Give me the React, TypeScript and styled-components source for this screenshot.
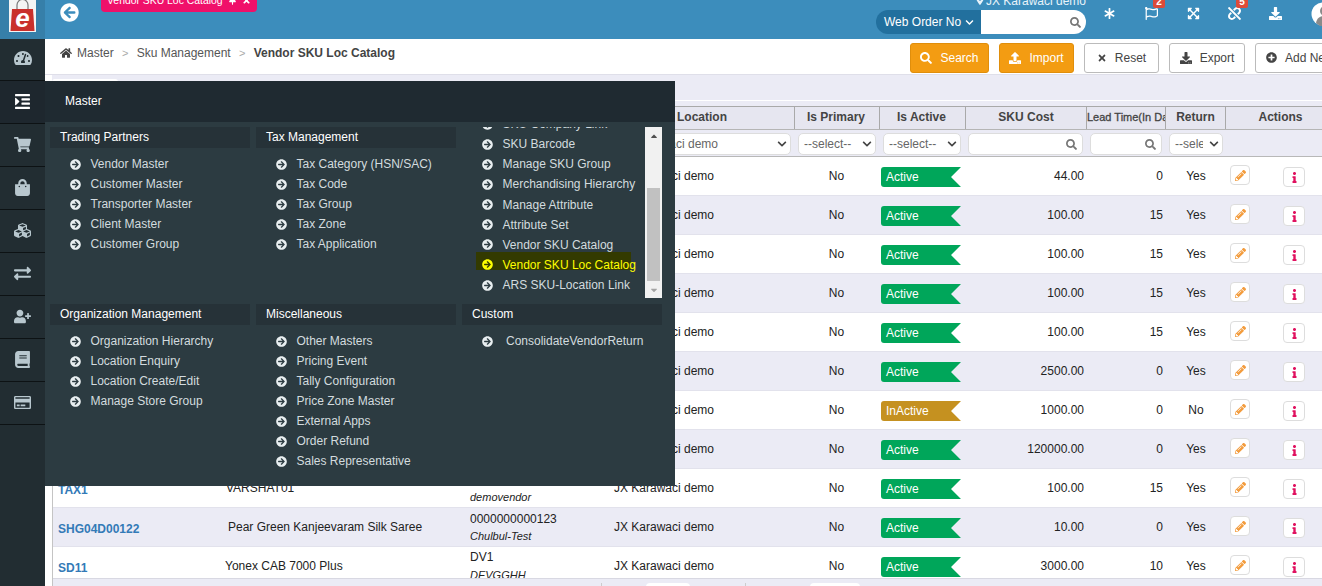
import React from "react";
import styled, { createGlobalStyle } from "styled-components";
import {
  FaArrowCircleLeft, FaArrowCircleRight, FaAsterisk, FaBook, FaChevronDown, FaCubes, FaDownload,
  FaExchangeAlt, FaExpandArrowsAlt, FaHome, FaIndent, FaInfo, FaMapMarkerAlt, FaPencilAlt, FaPlusCircle,
  FaRegCreditCard, FaRegFlag, FaSearch, FaShoppingBag, FaShoppingCart, FaTachometerAlt, FaThumbtack,
  FaTimes, FaUnlink, FaUpload, FaUserPlus, FaCaretUp, FaCaretDown,
} from "react-icons/fa";

const Global = createGlobalStyle`
  html, body { margin: 0; padding: 0; width: 1322px; height: 586px; overflow: hidden; background: #fff; }
  body, button { font-family: "Liberation Sans", Arial, sans-serif; font-size: 12px; }
  * { box-sizing: border-box; }
`;

const Page = styled.div`
  position: relative;
  width: 1322px;
  height: 586px;
  overflow: hidden;
  display: flex;
  flex-direction: column;
`;

const Header = styled.header`
  height: 39px;
  flex: none;
  background: #3c8dbc;
  display: flex;
  align-items: flex-start;
`;
const LogoBox = styled.div`
  width: 45px;
  height: 39px;
  flex: none;
  background: #367fa9;
  display: flex;
  justify-content: center;
  padding-right: 1px;
`;
const BackLink = styled.div`
  margin: 3px 0 0 15px;
  color: #fff;
  font-size: 19px;
  line-height: 0;
  width: 41px;
  flex: none;
`;
const PageTag = styled.div`
  height: 23px;
  margin-top: -11px;
  width: 156px;
  flex: none;
  background: #f0106a;
  border-radius: 4px;
  color: #fff;
  display: flex;
  align-items: center;
  padding-left: 6px;
  gap: 5px;
  font-size: 10.4px;
  white-space: nowrap;
`;
const TagIcons = styled.span`
  display: inline-flex;
  gap: 5px;
  font-size: 9px;
`;
const HeaderCenter = styled.div`
  margin-left: 619px;
  width: 210px;
  flex: none;
  display: flex;
  flex-direction: column;
`;
const LocationLine = styled.div`
  height: 15px;
  margin-top: -7px;
  margin-bottom: 2px;
  padding-left: 100px;
  color: #e8f3fa;
  white-space: nowrap;
  display: flex;
  align-items: center;
  gap: 2px;
  font-size: 12px;
  line-height: 12px;
`;
const OrderSearch = styled.div`
  height: 24px;
  display: flex;
  border-radius: 12px;
  overflow: hidden;
`;
const OrderSelect = styled.div`
  width: 105px;
  background: #22709e;
  color: #fff;
  display: flex;
  align-items: center;
  gap: 4px;
  padding-left: 8px;
  font-size: 12px;
  white-space: nowrap;
`;
const OrderInput = styled.div`
  flex: 1;
  background: #fff;
  color: #777;
  display: flex;
  align-items: center;
  justify-content: flex-end;
  padding-right: 5px;
  font-size: 11px;
`;
const HeaderIcons = styled.div`
  display: flex;
  flex: none;
  margin-left: 18px;
  height: 27px;
  align-items: center;
`;
const HeaderIcon = styled.div<{ $w: number }>`
  position: relative;
  width: ${(p) => p.$w}px;
  flex: none;
  color: #fff;
  font-size: 13px;
  line-height: 0;
  display: flex;
  justify-content: flex-start;
`;
const Badge = styled.span<{ $left: number }>`
  position: absolute;
  left: ${(p) => p.$left}px;
  top: -11px;
  width: 12px;
  height: 12px;
  border-radius: 2px;
  background: #dd4b39;
  color: #fff;
  font-size: 10px;
  font-weight: bold;
  line-height: 12px;
  text-align: center;
`;

const Body = styled.div`
  flex: 1;
  display: flex;
  min-height: 0;
`;
const Sidebar = styled.nav`
  width: 45px;
  flex: none;
  background: #222d32;
  display: flex;
  flex-direction: column;
`;
const SideItem = styled.div<{ $active?: boolean }>`
  height: 43px;
  flex: none;
  border-bottom: 1px solid #0d1214;
  display: flex;
  align-items: center;
  justify-content: center;
  padding-bottom: 2px;
  background: ${(p) => (p.$active ? "#1e272e" : "transparent")};
  color: ${(p) => (p.$active ? "#fff" : "#b8c7ce")};
  font-size: 17px;
`;
const FirstSideItem = styled(SideItem)`
  height: 42px;
  font-size: 18px;
  padding-bottom: 3px;
`;

const Main = styled.main`
  flex: 1;
  min-width: 0;
  display: flex;
  flex-direction: column;
  background: #fff;
`;
const Toolbar = styled.div`
  height: 36px;
  flex: none;
  display: flex;
  align-items: center;
  padding-left: 15px;
  color: #555;
  border-bottom: 1px solid #dfdfe9;
`;
const Crumbs = styled.div`
  display: flex;
  align-items: center;
  width: 850px;
  flex: none;
  margin-top: -8px;
  font-size: 12px;
  white-space: nowrap;
`;
const CrumbHome = styled.span`
  color: #444;
  font-size: 12px;
  line-height: 0;
  margin-right: 5px;
`;
const Sep = styled.span`
  color: #aaa;
  font-size: 11px;
  margin: 0 8.25px;
`;
const Current = styled.b`
  color: #444;
`;
const ToolButton = styled.div<{ $primary?: boolean; $w: number }>`
  width: ${(p) => p.$w}px;
  height: 30px;
  margin-top: 2px;
  margin-right: 10px;
  flex: none;
  border-radius: 3px;
  border: 1px solid ${(p) => (p.$primary ? "#e08e0b" : "#bbb")};
  background: ${(p) => (p.$primary ? "#f39c12" : "#fff")};
  color: ${(p) => (p.$primary ? "#fff" : "#444")};
  display: flex;
  align-items: center;
  justify-content: center;
  gap: 8px;
  font-size: 12px;
  white-space: nowrap;
`;
const ClippedButton = styled(ToolButton)`
  justify-content: flex-start;
  padding-left: 10px;
  margin-right: -60px;
`;
const Content = styled.div`
  flex: 1;
  min-height: 0;
  padding-left: 7px;
  display: flex;
  flex-direction: column;
`;
const TabStrip = styled.div`
  height: 25px;
  flex: none;
  background: #ebebf5;
  padding-top: 4px;
`;
const Tab = styled.div`
  width: 66px;
  height: 21px;
  background: #fff;
  border-radius: 3px 3px 0 0;
`;
const TableTop = styled.div`
  flex: none;
  height: 5px;
  margin-top: 1px;
  background: #ebebf5;
`;
const Table = styled.div`
  flex: 1;
  min-height: 0;
  display: flex;
  flex-direction: column;
  border-left: 1px solid #c4c4c4;
  border-top: 1px solid #a9a9a9;
`;
const columns = "167px 245px 143px 187px 85px 86px 121px 79px 60px 110px";
const HeadRow = styled.div`
  display: grid;
  grid-template-columns: ${columns};
  height: 23px;
  flex: none;
  background: #e6e6f0;
  border-bottom: 1px solid #b5b5b5;
`;
const HeadCell = styled.div<{ $shift?: number }>`
  border-right: 1px solid #a9a9a9;
  color: #444;
  font-weight: bold;
  font-size: 12px;
  text-align: center;
  line-height: 20px;
  padding: 0 ${(p) => (p.$shift && p.$shift < 0 ? -p.$shift : 0)}px 0 ${(p) => (p.$shift && p.$shift > 0 ? p.$shift : 0)}px;
  white-space: nowrap;
  overflow: hidden;
`;
const NarrowHeadCell = styled(HeadCell)`
  font-size: 11px;
  font-weight: 400;
  -webkit-text-stroke: 0.3px #444;
  text-align: left;
`;
const FilterRow = styled.div`
  display: grid;
  grid-template-columns: ${columns};
  height: 27px;
  flex: none;
  background: #ebebf5;
  border-bottom: 1px solid #b8b8b8;
`;
const FilterCell = styled.div<{ $l?: number; $r?: number }>`
  padding: 3px ${(p) => p.$r ?? 4}px 0 ${(p) => p.$l ?? 3}px;
  min-width: 0;
`;
const FilterBox = styled.div`
  height: 22px;
  background: #fff;
  border: 1px solid #ddd;
  border-radius: 5px;
  display: flex;
  align-items: center;
  justify-content: space-between;
  padding: 0 3px 0 5px;
  color: #666;
  font-size: 12px;
  white-space: nowrap;
  overflow: hidden;
`;
const FilterText = styled.span`
  overflow: hidden;
  flex: 1;
  min-width: 0;
  margin-right: 4px;
`;
const Chevron = styled.span`
  color: #444;
  font-size: 10px;
  line-height: 0;
  margin-left: 2px;
  flex: none;
`;
const Lens = styled.span`
  color: #777;
  font-size: 11px;
  line-height: 0;
  margin-left: auto;
  margin-right: 2px;
`;
const RowsClip = styled.div`
  height: 422px;
  flex: none;
  overflow: hidden;
  border-bottom: 1px solid #d8d8e2;
`;
const Row = styled.div<{ $alt: boolean }>`
  display: grid;
  grid-template-columns: ${columns};
  height: 39px;
  background: ${(p) => (p.$alt ? "#ebebf5" : "#fff")};
  border-bottom: 1px solid #e2e2ec;
  color: #222;
  font-size: 12px;
  white-space: nowrap;
`;
const SkuCell = styled.div`
  color: #337ab7;
  font-weight: bold;
  padding: 14px 0 0 5px;
`;
const NameCell = styled.div<{ $indent: number }>`
  padding: 12px 0 0 ${(p) => p.$indent}px;
`;
const VendorCell = styled.div<{ $top: number }>`
  padding: ${(p) => p.$top}px 0 0 5px;
  display: flex;
  flex-direction: column;
  line-height: 14px;
`;
const VendorName = styled.i<{ $top: number }>`
  font-size: 11px;
  margin-top: ${(p) => p.$top}px;
`;
const PlainCell = styled.div<{ $align?: string; $pad?: number }>`
  text-align: ${(p) => p.$align ?? "center"};
  padding: 12px ${(p) => p.$pad ?? 0}px 0 ${(p) => (p.$align === "left" ? 6 : 0)}px;
  line-height: 14px;
`;
const StatusCell = styled.div`
  padding: 10px 0 0 1px;
`;
const Status = styled.div<{ $inactive: boolean }>`
  width: 80px;
  height: 20px;
  border-radius: 3px 0 0 3px;
  background: ${(p) => (p.$inactive ? "#c59120" : "#00a65a")};
  color: #fff;
  line-height: 20px;
  padding-left: 5px;
  clip-path: polygon(0 0, 100% 0, calc(100% - 10px) 50%, 100% 100%, 0 100%);
`;
const ActionsCell = styled.div`
  display: flex;
  align-items: flex-start;
`;
const EditButton = styled.div`
  width: 20px;
  height: 20px;
  margin: 8px 0 0 4px;
  flex: none;
  background: #fff;
  border: 1px solid #ddd;
  border-radius: 4px;
  color: #f39c3d;
  font-size: 11px;
  display: flex;
  align-items: center;
  justify-content: center;
`;
const InfoButton = styled(EditButton)`
  width: 22px;
  margin: 10px 0 0 33px;
  color: #e0115f;
`;
const Footer = styled.div`
  flex: 1;
  background: #ebebf5;
  display: flex;
  padding: 4px 0 0 548px;
  overflow: hidden;
`;
const Divider = styled.div`
  width: 1px;
  height: 6px;
  background: #ccc;
  flex: none;
`;
const Pill = styled.div<{ $w: number; $ml: number }>`
  width: ${(p) => p.$w}px;
  margin-left: ${(p) => p.$ml}px;
  height: 8px;
  flex: none;
  background: #fff;
  border-radius: 4px;
`;

const Overlay = styled.section`
  position: absolute;
  left: 45px;
  top: 81px;
  width: 630px;
  height: 405px;
  background: #2c3b41;
  color: #d3dbdf;
  font-size: 12px;
  display: flex;
  flex-direction: column;
`;
const OverlayTitle = styled.div`
  height: 41px;
  flex: none;
  background: #1f2a31;
  color: #fff;
  padding-left: 20px;
  line-height: 41px;
`;
const OverlayGrid = styled.div`
  padding: 5px 0 0 5px;
  display: grid;
  grid-template-columns: repeat(3, 200px);
  grid-template-rows: 177px 1fr;
  column-gap: 6px;
`;
const Block = styled.div`
  min-height: 0;
`;
const BlockTitle = styled.div`
  height: 21px;
  background: #263238;
  color: #fff;
  padding-left: 10px;
  line-height: 20px;
  margin-bottom: 6px;
`;
const MenuItem = styled.div<{ $on?: boolean; $gap?: number; $h?: number }>`
  position: relative;
  isolation: isolate;
  height: ${(p) => p.$h ?? 20}px;
  display: flex;
  align-items: center;
  gap: ${(p) => p.$gap ?? 9.5}px;
  padding-left: 20px;
  white-space: nowrap;
  color: ${(p) => (p.$on ? "#ffff00" : "#d3dbdf")};
  ${(p) =>
    p.$on
      ? `&::before { content: ""; position: absolute; z-index: -1; left: 14px; top: -3px; width: 155px; height: 18px; background: #333a00; }`
      : ""}
`;
const ItemArrow = styled.span`
  display: inline-flex;
  font-size: 11px;
  color: #e8eef0;
  flex: none;
`;
const ItemArrowOn = styled(ItemArrow)`
  color: #ffff00;
`;
const ScrollBlock = styled.div`
  height: 171px;
  display: flex;
  overflow: hidden;
`;
const ScrollList = styled.div`
  width: 183px;
  flex: none;
  overflow: hidden;
`;
const ScrollInner = styled.div`
  margin-top: -13px;
`;
const ScrollBar = styled.div`
  width: 17px;
  flex: none;
  background: #f1f1f1;
  display: flex;
  flex-direction: column;
  align-items: center;
  justify-content: space-between;
  padding: 0 2px;
  color: #505050;
  font-size: 10px;
  position: relative;
`;
const ScrollArrow = styled.div<{ $muted?: boolean }>`
  height: 17px;
  display: flex;
  align-items: center;
  color: ${(p) => (p.$muted ? "#a3a3a3" : "#505050")};
`;
const Thumb = styled.div`
  position: absolute;
  left: 2px;
  top: 61px;
  width: 13px;
  height: 93px;
  background: #c1c1c1;
`;

const Logo = () => (
  <svg width="27" height="33" viewBox="0 0 27 33" aria-hidden>
    <rect width="27" height="32" fill="#f4f4f4" />
    <path d="M8 10V5a5.500 5.500 0 0 1 11 0v5" stroke="#777" strokeWidth="1.200" fill="none" />
    <path d="M3 9h21l1.500 22H1.500z" fill="#c9302c" />
    <text x="13.500" y="27" textAnchor="middle" fontFamily="'Liberation Sans', sans-serif" fontWeight="bold" fontStyle="italic" fontSize="26" fill="#fff">e</text>
  </svg>
);

const Avatar = () => (
  <svg width="24" height="24" viewBox="0 0 24 24" aria-hidden>
    <circle cx="12" cy="12" r="11.500" fill="#fff" />
    <circle cx="14" cy="9" r="5" fill="#8a8a8a" />
    <path d="M5 21c1-6 5-7 9-7s8 2 9 7l-4 3H9z" fill="#8a8a8a" />
  </svg>
);

const trading = ["Vendor Master", "Customer Master", "Transporter Master", "Client Master", "Customer Group"];
const tax = ["Tax Category (HSN/SAC)", "Tax Code", "Tax Group", "Tax Zone", "Tax Application"];
const sku = ["SKU Company Link", "SKU Barcode", "Manage SKU Group", "Merchandising Hierarchy", "Manage Attribute", "Attribute Set", "Vendor SKU Catalog", "Vendor SKU Loc Catalog", "ARS SKU-Location Link"];
const org = ["Organization Hierarchy", "Location Enquiry", "Location Create/Edit", "Manage Store Group"];
const misc = ["Other Masters", "Pricing Event", "Tally Configuration", "Price Zone Master", "External Apps", "Order Refund", "Sales Representative"];

type RowData = { cost: string; lead: string; ret: string; inactive?: boolean; id?: string; name?: string; indent?: number; code?: string; vendor?: string; top?: number };
const rows: RowData[] = [
  { cost: "44.00", lead: "0", ret: "Yes" },
  { cost: "100.00", lead: "15", ret: "Yes" },
  { cost: "100.00", lead: "15", ret: "Yes" },
  { cost: "100.00", lead: "15", ret: "Yes" },
  { cost: "100.00", lead: "15", ret: "Yes" },
  { cost: "2500.00", lead: "0", ret: "Yes" },
  { cost: "1000.00", lead: "0", ret: "No", inactive: true },
  { cost: "120000.00", lead: "0", ret: "Yes" },
  { cost: "100.00", lead: "15", ret: "Yes", id: "TAX1", name: "VARSHAT01", indent: 6, vendor: "demovendor" },
  { cost: "10.00", lead: "0", ret: "Yes", id: "SHG04D00122", name: "Pear Green Kanjeevaram Silk Saree", indent: 8, code: "0000000000123", vendor: "Chulbul-Test" },
  { cost: "3000.00", lead: "10", ret: "Yes", id: "SD11", name: "Yonex CAB 7000 Plus", indent: 5, code: "DV1", vendor: "DEVGGHH", top: 3 },
];

const Items = ({ list }: { list: string[] }) => (
  <>
    {list.map((t) => (
      <MenuItem key={t}>
        <ItemArrow><FaArrowCircleRight /></ItemArrow>
        {t}
      </MenuItem>
    ))}
  </>
);

export default function App() {
  return (
    <Page>
      <Global />
      <Header>
        <LogoBox><Logo /></LogoBox>
        <BackLink><FaArrowCircleLeft /></BackLink>
        <PageTag>
          Vendor SKU Loc Catalog
          <TagIcons><FaThumbtack /><FaTimes /></TagIcons>
        </PageTag>
        <HeaderCenter>
          <LocationLine><FaMapMarkerAlt size={9} />JX Karawaci demo</LocationLine>
          <OrderSearch>
            <OrderSelect>Web Order No <FaChevronDown size={9} /></OrderSelect>
            <OrderInput><FaSearch /></OrderInput>
          </OrderSearch>
        </HeaderCenter>
        <HeaderIcons>
          <HeaderIcon $w={41}><FaAsterisk size={11} /></HeaderIcon>
          <HeaderIcon $w={42}><FaRegFlag /><Badge $left={8}>2</Badge></HeaderIcon>
          <HeaderIcon $w={41}><FaExpandArrowsAlt /></HeaderIcon>
          <HeaderIcon $w={41}><FaUnlink /><Badge $left={8}>5</Badge></HeaderIcon>
          <HeaderIcon $w={42}><FaDownload /></HeaderIcon>
          <HeaderIcon $w={24}><Avatar /></HeaderIcon>
        </HeaderIcons>
      </Header>
      <Body>
        <Sidebar>
          <FirstSideItem><FaTachometerAlt /></FirstSideItem>
          <SideItem $active><FaIndent /></SideItem>
          <SideItem><FaShoppingCart /></SideItem>
          <SideItem><FaShoppingBag /></SideItem>
          <SideItem><FaCubes /></SideItem>
          <SideItem><FaExchangeAlt /></SideItem>
          <SideItem><FaUserPlus /></SideItem>
          <SideItem><FaBook /></SideItem>
          <SideItem><FaRegCreditCard /></SideItem>
        </Sidebar>
        <Main>
          <Toolbar>
            <Crumbs>
              <CrumbHome><FaHome /></CrumbHome>
              Master
              <Sep>&gt;</Sep>
              Sku Management
              <Sep>&gt;</Sep>
              <Current>Vendor SKU Loc Catalog</Current>
            </Crumbs>
            <ToolButton $primary $w={79}><FaSearch size={12} /> Search</ToolButton>
            <ToolButton $primary $w={75}><FaUpload size={12} /> Import</ToolButton>
            <ToolButton $w={75}><FaTimes size={10} /> Reset</ToolButton>
            <ToolButton $w={76}><FaDownload size={12} /> Export</ToolButton>
            <ClippedButton $w={120}><FaPlusCircle size={11} /> Add New</ClippedButton>
          </Toolbar>
          <Content>
            <TabStrip><Tab /></TabStrip>
            <TableTop />
            <Table>
              <HeadRow>
                <HeadCell />
                <HeadCell />
                <HeadCell />
                <HeadCell $shift={2}>Location</HeadCell>
                <HeadCell $shift={-2}>Is Primary</HeadCell>
                <HeadCell $shift={-2}>Is Active</HeadCell>
                <HeadCell>SKU Cost</HeadCell>
                <NarrowHeadCell>Lead Time(In Days)</NarrowHeadCell>
                <HeadCell>Return</HeadCell>
                <HeadCell>Actions</HeadCell>
              </HeadRow>
              <FilterRow>
                <FilterCell />
                <FilterCell />
                <FilterCell />
                <FilterCell $l={4}>
                  <FilterBox><FilterText>JX Karawaci demo</FilterText><Chevron><FaChevronDown /></Chevron></FilterBox>
                </FilterCell>
                <FilterCell>
                  <FilterBox><FilterText>--select--</FilterText><Chevron><FaChevronDown /></Chevron></FilterBox>
                </FilterCell>
                <FilterCell $r={5}>
                  <FilterBox><FilterText>--select--</FilterText><Chevron><FaChevronDown /></Chevron></FilterBox>
                </FilterCell>
                <FilterCell $l={2}><FilterBox><Lens><FaSearch /></Lens></FilterBox></FilterCell>
                <FilterCell><FilterBox><Lens><FaSearch /></Lens></FilterBox></FilterCell>
                <FilterCell $r={3}>
                  <FilterBox><FilterText>--select--</FilterText><Chevron><FaChevronDown /></Chevron></FilterBox>
                </FilterCell>
                <FilterCell />
              </FilterRow>
              <RowsClip>
                {rows.map((r, i) => (
                  <Row key={i} $alt={i % 2 === 1}>
                    <SkuCell>{r.id}</SkuCell>
                    <NameCell $indent={r.indent ?? 5}>{r.name}</NameCell>
                    <VendorCell $top={r.top ?? 4}>
                      <span>{r.code ?? "\u00a0"}</span>
                      <VendorName $top={r.top ? 4 : 3}>{r.vendor}</VendorName>
                    </VendorCell>
                    <PlainCell $align="left">JX Karawaci demo</PlainCell>
                    <PlainCell $pad={2}>No</PlainCell>
                    <StatusCell><Status $inactive={!!r.inactive}>{r.inactive ? "InActive" : "Active"}</Status></StatusCell>
                    <PlainCell $align="right" $pad={3}>{r.cost}</PlainCell>
                    <PlainCell $align="right" $pad={3}>{r.lead}</PlainCell>
                    <PlainCell>{r.ret}</PlainCell>
                    <ActionsCell>
                      <EditButton><FaPencilAlt /></EditButton>
                      <InfoButton><FaInfo /></InfoButton>
                    </ActionsCell>
                  </Row>
                ))}
              </RowsClip>
              <Footer>
                <Divider />
                <Pill $w={44} $ml={44} />
                <Pill $w={0} $ml={55} />
                <Divider />
                <Pill $w={50} $ml={64} />
              </Footer>
            </Table>
          </Content>
        </Main>
      </Body>
      <Overlay>
        <OverlayTitle>Master</OverlayTitle>
        <OverlayGrid>
          <Block>
            <BlockTitle>Trading Partners</BlockTitle>
            <Items list={trading} />
          </Block>
          <Block>
            <BlockTitle>Tax Management</BlockTitle>
            <Items list={tax} />
          </Block>
          <ScrollBlock>
            <ScrollList>
              <ScrollInner>
                {sku.map((t) => {
                  const on = t === "Vendor SKU Loc Catalog";
                  const A = on ? ItemArrowOn : ItemArrow;
                  return (
                    <MenuItem key={t} $on={on} $h={20.14}>
                      <A><FaArrowCircleRight /></A>
                      {t}
                    </MenuItem>
                  );
                })}
              </ScrollInner>
            </ScrollList>
            <ScrollBar>
              <ScrollArrow><FaCaretUp /></ScrollArrow>
              <Thumb />
              <ScrollArrow $muted><FaCaretDown /></ScrollArrow>
            </ScrollBar>
          </ScrollBlock>
          <Block>
            <BlockTitle>Organization Management</BlockTitle>
            <Items list={org} />
          </Block>
          <Block>
            <BlockTitle>Miscellaneous</BlockTitle>
            <Items list={misc} />
          </Block>
          <Block>
            <BlockTitle>Custom</BlockTitle>
            <MenuItem $gap={13}>
              <ItemArrow><FaArrowCircleRight /></ItemArrow>
              ConsolidateVendorReturn
            </MenuItem>
          </Block>
        </OverlayGrid>
      </Overlay>
    </Page>
  );
}
